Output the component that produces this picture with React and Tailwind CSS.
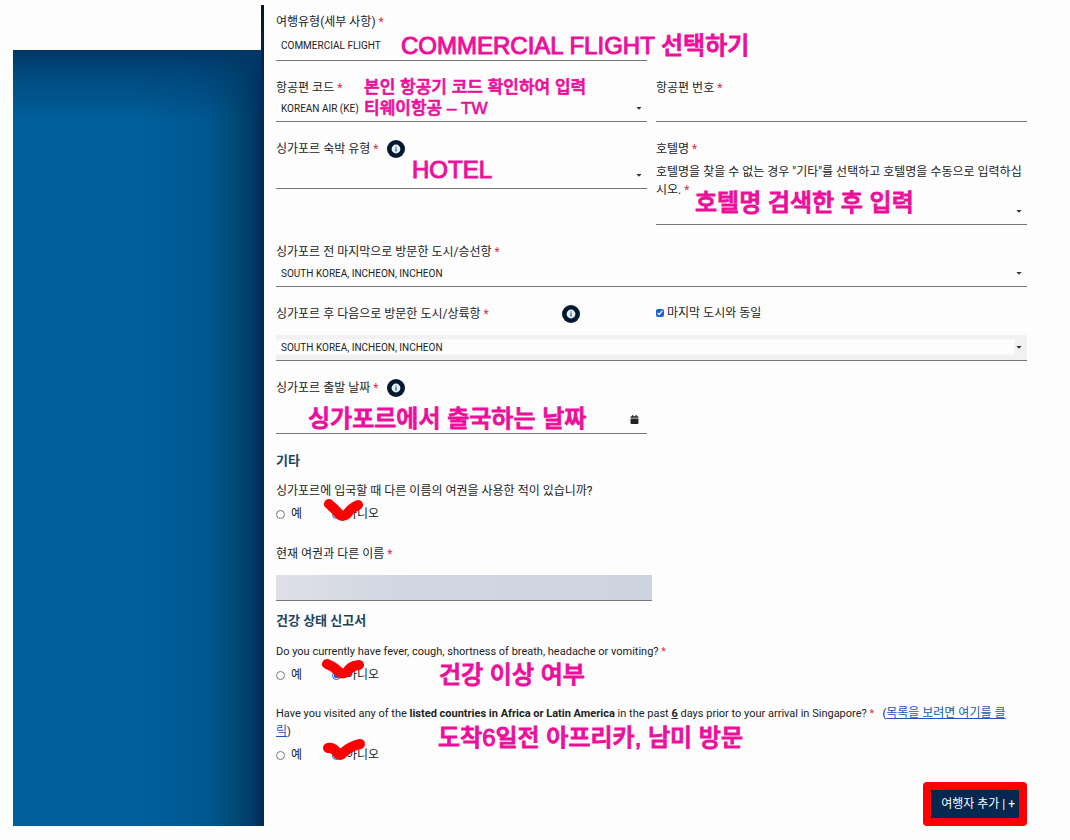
import { useState } from 'react';
import { FaCalendar, FaCaretDown } from 'react-icons/fa';

const ports = ['SOUTH KOREA, INCHEON, INCHEON', 'SOUTH KOREA, BUSAN, GIMHAE'];

function Required() {
  return <span className="text-[#d9304f]"> *</span>;
}

function Label({ htmlFor, children }) {
  return (
    <label htmlFor={htmlFor} className="block h-5 leading-[22px] whitespace-nowrap">
      {children}
      <Required />
    </label>
  );
}

function InfoButton({ label }) {
  return (
    <button type="button" aria-label={label} className="block size-[18px] shrink-0">
      <svg viewBox="0 0 18 18" className="size-full">
        <circle cx="9" cy="9" r="9" fill="#04182f" />
        <circle cx="9" cy="9" r="4.4" fill="#e4f1fa" />
        <path d="M9 6.4v1M9 8.2v3.4" stroke="#3f6485" strokeWidth="1.4" />
      </svg>
    </button>
  );
}

function Select({ id, options = [], className = 'h-[26px]', caret = true }) {
  return (
    <div className={`relative border-b border-[#777] ${className}`}>
      <select
        id={id}
        className="block size-full appearance-none bg-transparent pl-[5px] pr-5 text-[10px] outline-none"
      >
        {options.length === 0 && <option value=""></option>}
        {options.map((option) => (
          <option key={option}>{option}</option>
        ))}
      </select>
      {caret && (
        <FaCaretDown className="pointer-events-none absolute right-1 bottom-[9px] size-2 text-[#333]" />
      )}
    </div>
  );
}

// Nota escrita encima del formulario
function Note({ className, children }) {
  return (
    <p
      className={`pointer-events-none absolute z-10 whitespace-nowrap font-['Liberation_Sans','Noto_Sans_CJK_KR',sans-serif] font-medium text-[#ec0f9b] ${className}`}
    >
      {children}
    </p>
  );
}

function YesNo({ name, legend, mark, children }) {
  const [value, setValue] = useState('no');

  return (
    <div role="radiogroup" aria-label={legend} className="relative mt-1 flex h-5 items-center leading-[18px]">
      <label className="flex w-14 items-center gap-[6px]">
        <input
          type="radio"
          name={name}
          checked={value === 'yes'}
          onChange={() => setValue('yes')}
          className="size-[9px] accent-[#1662d9]"
        />
        예
      </label>
      <label className="flex items-center gap-[5px]">
        <input
          type="radio"
          name={name}
          checked={value === 'no'}
          onChange={() => setValue('no')}
          className="size-[9px] accent-[#1662d9]"
        />
        아니오
      </label>
      <svg
        viewBox="0 0 44 28"
        className="pointer-events-none absolute -top-2 left-[46px] h-7 w-11"
        fill="none"
        stroke="#fb0000"
        strokeWidth="10"
        strokeLinecap="round"
        strokeLinejoin="round"
      >
        <path d={mark} />
      </svg>
      {children}
    </div>
  );
}

export default function App() {
  const [sameCity, setSameCity] = useState(true);

  return (
    <div className="flex min-h-screen items-start bg-[#fdfdfd] pt-[5px] pr-[43px] pb-3 pl-[13px] font-[Roboto,'Noto_Sans_CJK_KR',sans-serif] text-xs text-[#222]">
      <div className="flex w-full">
        <aside className="flex w-[251px] shrink-0">
          <div className="mt-[45px] flex-1 bg-[linear-gradient(to_bottom,#003766_0,#00376699_20px,#00376600_70px),linear-gradient(to_right,#00609b_50%,#005790_78%,#004a76_90%,#003a67_97%,#002b59)]" />
          <div className="w-[3px] bg-[linear-gradient(to_bottom,#03172f,#002c5a_80px)]" />
        </aside>

        <form onSubmit={(e) => e.preventDefault()} className="min-w-0 flex-1 pt-[6px] pl-3">
          <div className="grid grid-cols-2 gap-x-[9px] gap-y-4">
            <div className="relative">
              <Label htmlFor="travel-type">여행유형(세부 사항)</Label>
              <Select id="travel-type" options={['COMMERCIAL FLIGHT']} className="h-[30px]" caret={false} />
              <Note className="top-[17px] left-[125px] text-2xl leading-9 [-webkit-text-stroke:1px]">
                COMMERCIAL FLIGHT 선택하기
              </Note>
            </div>
            <div />

            <div className="relative">
              <Label htmlFor="carrier">항공편 코드</Label>
              <Select id="carrier" options={['KOREAN AIR (KE)']} className="h-[25px]" />
              <Note className="top-0 left-[88px] text-[17px] leading-[21px] [-webkit-text-stroke:0.7px]">
                본인 항공기 코드 확인하여 입력
                <br />
                티웨이항공 – TW
              </Note>
            </div>
            <div>
              <Label htmlFor="flight-number">항공편 번호</Label>
              <input
                id="flight-number"
                type="text"
                className="block h-[25px] w-full border-b border-[#777] bg-transparent px-[5px] text-[10px] outline-none"
              />
            </div>

            <div className="relative">
              <div className="flex items-end gap-[9px]">
                <Label htmlFor="stay-type">싱가포르 숙박 유형</Label>
                <InfoButton label="숙박 유형 안내" />
              </div>
              <Select id="stay-type" className="h-[31px]" />
              <Note className="top-[14px] left-[136px] text-2xl leading-9 [-webkit-text-stroke:1px]">HOTEL</Note>
            </div>
            <div className="relative">
              <Label htmlFor="hotel">호텔명</Label>
              <p className="mt-[5px] leading-[18px] break-all">
                호텔명을 찾을 수 없는 경우 "기타"를 선택하고 호텔명을 수동으로 입력하십시오.
                <Required />
              </p>
              <Select id="hotel" />
              <Note className="top-[47px] left-[39px] text-2xl leading-9 [-webkit-text-stroke:1px]">
                호텔명 검색한 후 입력
              </Note>
            </div>

            <div className="col-span-2">
              <Label htmlFor="last-city">싱가포르 전 마지막으로 방문한 도시/승선항</Label>
              <Select id="last-city" options={ports} />
            </div>

            <div className="flex items-end justify-between pr-[67px]">
              <Label htmlFor="next-city">싱가포르 후 다음으로 방문한 도시/상륙항</Label>
              <InfoButton label="다음 도시 안내" />
            </div>
            <label className="flex h-5 items-center gap-[3px] leading-[22px]">
              <input
                type="checkbox"
                checked={sameCity}
                onChange={(e) => setSameCity(e.target.checked)}
                className="size-2 accent-[#1662d9]"
              />
              마지막 도시와 동일
            </label>
            <div className="relative col-span-2 -mt-1">
              <Select
                id="next-city"
                options={ports}
                className="h-[26px] bg-[linear-gradient(to_left,#f1f1f1_12px,transparent_13px),linear-gradient(to_bottom,#f1f1f1_4px,#fdfdfd_5px,#fdfdfd_19px,#f1f1f1_20px)]"
              />
            </div>

            <div className="relative">
              <div className="flex items-end gap-[9px]">
                <Label htmlFor="departure">싱가포르 출발 날짜</Label>
                <InfoButton label="출발 날짜 안내" />
              </div>
              <div className="relative h-[37px] border-b border-[#777]">
                <input
                  id="departure"
                  type="text"
                  className="block size-full bg-transparent pr-6 pl-[5px] text-[10px] outline-none"
                />
                <FaCalendar className="absolute right-2 bottom-[9px] size-[9px] text-[#222]" />
              </div>
              <Note className="top-6 left-8 text-2xl leading-9 [-webkit-text-stroke:1px]">
                싱가포르에서 출국하는 날짜
              </Note>
            </div>
          </div>

          {/* Otros datos */}
          <h2 className="mt-4 h-5 text-[13px] leading-[22px] font-bold text-[#1c4460]">기타</h2>
          <p className="mt-[10px] h-5 leading-[22px]">
            싱가포르에 입국할 때 다른 이름의 여권을 사용한 적이 있습니까?
          </p>
          <YesNo name="other-passport" legend="다른 이름의 여권 사용" mark="M7 8 Q14 14 18 19 Q21 21 25 18 Q29 12 36 9" />

          <div className="mt-[19px] w-1/2">
            <Label htmlFor="other-name">현재 여권과 다른 이름</Label>
            <input
              id="other-name"
              type="text"
              className="mt-3 block h-[26px] w-full border-b border-[#777] bg-linear-to-r from-[#e0dfe9] via-[#d1d8e3] via-30% to-[#cdd4df] px-[5px] text-[10px] outline-none"
            />
          </div>

          {/* Declaración de salud */}
          <h2 className="mt-[9px] h-5 text-[13px] leading-[22px] font-bold text-[#1c4460]">건강 상태 신고서</h2>
          <p className="mt-[11px] h-5 text-[11px] leading-[22px]">
            Do you currently have fever, cough, shortness of breath, headache or vomiting?
            <Required />
          </p>
          <YesNo name="symptoms" legend="건강 이상 증상" mark="M5 7 Q11 9 16 14 Q20 18 25 15 Q28 9 37 8">
            <Note className="-top-2 left-[163px] text-2xl leading-9 [-webkit-text-stroke:1px]">
              건강 이상 여부
            </Note>
          </YesNo>

          <p className="mt-5 pr-[14px] text-[11px] leading-[18px] break-all">
            Have you visited any of the <b>listed countries in Africa or Latin America</b> in the past{' '}
            <b className="underline">6</b> days prior to your arrival in Singapore?
            <Required />
            {'\u00a0\u00a0 '}(
            <a href="#countries" className="text-xs leading-4 text-[#1f56b5] underline">
              목록을 보려면 여기를 클릭
            </a>
            )
          </p>
          <YesNo name="visited" legend="아프리카, 남미 방문" mark="M6 11 Q12 10 16 17 Q19 19 22 15 Q29 9 38 7">
            <Note className="-top-[25px] left-[162px] text-2xl leading-9 [-webkit-text-stroke:1px]">
              도착6일전 아프리카, 남미 방문
            </Note>
          </YesNo>

          <div className="mt-[17px] flex justify-end">
            <div className="rounded-sm bg-[#fb0000] p-2">
              <button type="button" className="block h-7 bg-[#04284f] pr-1 pl-[10px] whitespace-nowrap text-white">
                여행자 추가 | +
              </button>
            </div>
          </div>
        </form>
      </div>
    </div>
  );
}
